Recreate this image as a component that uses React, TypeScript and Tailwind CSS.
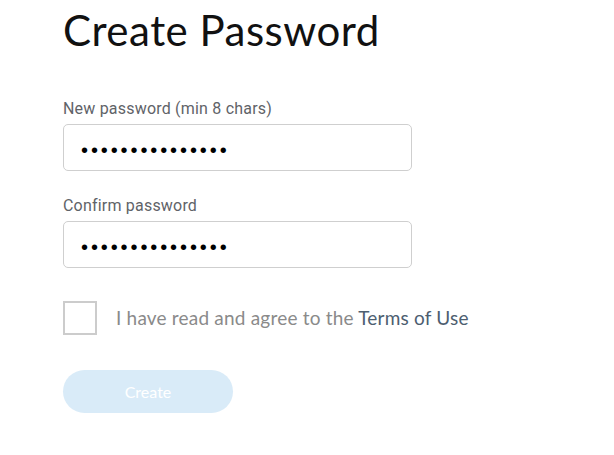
import { useState } from 'react';

const PasswordField = ({ label, value }: { label: string; value: string }) => {
  return (
    <div className="flex flex-col">
      <label className="text-[16px] leading-[20px] text-[#5f6368] font-['Roboto',sans-serif] tracking-[0.2px]">{label}</label>
      <input
        type="password"
        defaultValue={value}
        className="mt-[5px] h-[47px] w-[349px] rounded-[5px] border border-[#cfcfcf] bg-white px-[17px] pt-[5px] text-[20px] text-black outline-none font-['Liberation_Sans',sans-serif] tracking-[2.9px]"
      />
    </div>
  );
};

const App = () => {
  const [agreed, setAgreed] = useState(false);

  return (
    <div className="min-h-[455px] w-full bg-white pl-[63px] pt-[6px]">
      <h1 className="text-[42px] leading-[48px] text-[#111111] font-['Lato',sans-serif] font-normal tracking-[0.5px]">
        Create Password
      </h1>

      <div className="mt-[45px] flex flex-col gap-[25px]">
        <PasswordField label="New password (min 8 chars)" value="passwordpasswor" />
        <PasswordField label="Confirm password" value="passwordpasswor" />
      </div>

      <div className="mt-[33px] flex items-center gap-[19px]">
        <button
          onClick={() => setAgreed(!agreed)}
          className="h-[34px] w-[34px] border-2 border-[#cccccc] bg-white"
        ></button>
        <p className="text-[19px] text-[#8a8a8a] font-['Lato',sans-serif] tracking-[0.2px]">
          I have read and agree to the <span className="text-[#4d5e70]">Terms of Use</span>
        </p>
      </div>

      <button
        disabled={!agreed}
        className="mt-[35px] h-[43px] w-[170px] rounded-full bg-[#d9ebf8] text-[16px] text-white font-['Lato',sans-serif]"
      >
        Create
      </button>
    </div>
  );
};

export default App;
